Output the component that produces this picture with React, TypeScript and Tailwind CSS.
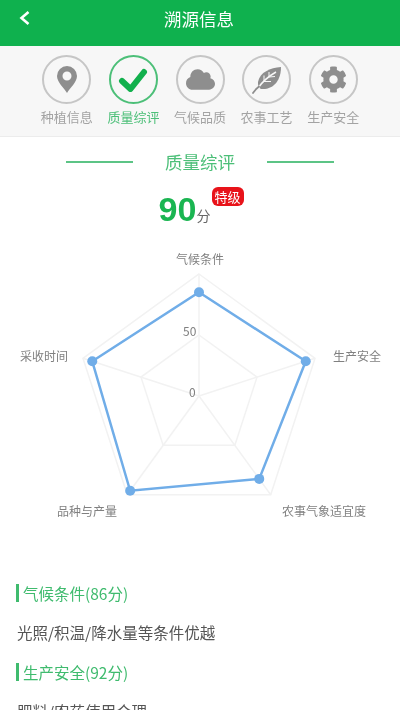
import React from 'react';
import { FaCog, FaCloud } from 'react-icons/fa';

const font = { fontFamily: '"Noto Sans CJK SC", sans-serif' };

const cx = 199;
const cy = 397;
const R = 122;
const scores = [0.85, 0.92, 0.84, 0.96, 0.92];

const point = (i: number, r: number) => {
  const a = (-90 + i * 72) * (Math.PI / 180);
  return [cx + r * Math.cos(a), cy - 240 + r * Math.sin(a)];
};
const ring = (r: number) => [0, 1, 2, 3, 4].map((i) => point(i, r).join(',')).join(' ');

const PinIcon = () => (
  <svg width="20" height="27" viewBox="0 0 20 27">
    <path
      fillRule="evenodd"
      fill="#8e8e8e"
      d="M10 0a10 10 0 0 1 10 10c0 6-7 12-10 17C7 22 0 16 0 10A10 10 0 0 1 10 0zm0 5.500a4.500 4.500 0 1 0 0 9 4.500 4.500 0 0 0 0-9z"
    />
  </svg>
);

const CheckIcon = () => (
  <svg width="30" height="24" viewBox="0 0 30 24">
    <path d="M4 13l8.500 8L26 4" fill="none" stroke="#12b04d" strokeWidth="6" strokeLinecap="round" strokeLinejoin="round" />
  </svg>
);

const LeafIcon = () => (
  <svg width="30" height="28" viewBox="0 0 30 28">
    <path fill="#8e8e8e" d="M29 1C18 2 8 6 6 16c-.500 3 1 6 3 7C22 24 29 14 29 1z" />
    <path d="M6 22C11 15 17 10 24 6" fill="none" stroke="#f7f7f7" strokeWidth="1.500" />
    <path d="M1 27c2-3 4-5 6-6.500" fill="none" stroke="#8e8e8e" strokeWidth="1.800" strokeLinecap="round" />
    <path d="M12 15.500l0-6M17 11l0-5M12 15.500l7 0M17 11l6-.500" fill="none" stroke="#f7f7f7" strokeWidth="1" />
  </svg>
);

const tabs = [
  { label: '种植信息', icon: <PinIcon /> },
  { label: '质量综评', icon: <CheckIcon />, active: true },
  { label: '气候品质', icon: <FaCloud className="w-[29px] h-[29px] text-[#8e8e8e]" /> },
  { label: '农事工艺', icon: <LeafIcon /> },
  { label: '生产安全', icon: <FaCog className="w-[27px] h-[27px] text-[#8e8e8e]" /> },
];

const sections = [
  { title: '气候条件(86分)', text: '光照/积温/降水量等条件优越' },
  { title: '生产安全(92分)', text: '肥料/农药使用合理' },
];

export default function App() {
  return (
    <div className="w-[400px] h-[710px] overflow-hidden bg-white blur-[0.5px]" style={font}>
      <div className="relative h-[46px] bg-[#0fb14e] flex items-center justify-center pb-[8px] pr-[2px] text-white text-[17.500px]">
        <svg className="absolute left-[18px] top-[10px]" width="13" height="16" viewBox="0 0 13 16">
          <path d="M10.500 2L3.500 8l7 6" fill="none" stroke="white" strokeWidth="2.600" />
        </svg>
        溯源信息
      </div>

      <div className="h-[91px] bg-[#f7f7f7] border-b border-[#ececec] flex justify-center pt-[9px]">
        {tabs.map((t) => (
          <div key={t.label} className="w-[66.600px] flex flex-col items-center">
            <div className={`w-[49px] h-[49px] rounded-full border-2 flex items-center justify-center ${t.active ? 'border-[#4cbf78]' : 'border-[#c6c6c6]'}`}>
              {t.icon}
            </div>
            <span className={`mt-[3px] text-[13px] leading-[20px] ${t.active ? 'text-[#4cbf78]' : 'text-[#a3a3a3]'}`}>{t.label}</span>
          </div>
        ))}
      </div>

      <div className="mt-[13px] flex items-center justify-center">
        <div className="w-[67px] h-[2px] bg-[#5cc486]" />
        <span className="w-[134px] text-center text-[17.500px] leading-[24px] text-[#4cbf78]">质量综评</span>
        <div className="w-[67px] h-[2px] bg-[#5cc486]" />
      </div>

      <div className="mt-[13px] h-[43px] flex justify-center items-end">
        <div className="relative flex items-baseline -ml-[31px]">
          <span className="text-[34px] leading-[42px] font-bold text-[#1ab551]" style={{ fontFamily: '"Liberation Sans", sans-serif' }}>90</span>
          <span className="text-[14px] text-[#666666]">分</span>
          <span className="absolute left-[53px] top-[-1px] w-[32px] h-[19px] rounded-[6px] bg-[#e8131a] text-white text-[13px] leading-[19px] text-center">特级</span>
        </div>
      </div>

      <svg className="block mt-[9px]" width="400" height="330" viewBox="0 0 400 330">
        {[R, R / 2].map((r) => (
          <polygon key={r} points={ring(r)} fill="none" stroke="#f2f2f2" strokeWidth="1.500" />
        ))}
        {[0, 1, 2, 3, 4].map((i) => {
          const [x, y] = point(i, R);
          return <line key={i} x1={cx} y1={cy - 240} x2={x} y2={y} stroke="#f2f2f2" strokeWidth="1.500" />;
        })}
        <polygon
          points={scores.map((s, i) => point(i, R * s).join(',')).join(' ')}
          fill="none"
          stroke="#70ade8"
          strokeWidth="2.500"
        />
        {scores.map((s, i) => {
          const [x, y] = point(i, R * s);
          return <circle key={i} cx={x} cy={y} r="5" fill="#70ade8" />;
        })}
        <g fontSize="12" fill="#808080" dominantBaseline="central">
          <text x="200" y="19" textAnchor="middle">气候条件</text>
          <text x="333" y="116">生产安全</text>
          <text x="282" y="271">农事气象适宜度</text>
          <text x="57" y="271">品种与产量</text>
          <text x="20" y="116">采收时间</text>
          <text x="183" y="91">50</text>
          <text x="189" y="152">0</text>
        </g>
      </svg>

      <div className="mt-[15px] pl-[16px]">
        {sections.map((s) => (
          <div key={s.title}>
            <div className="h-[18px] border-l-[3px] border-[#3fbb6e] pl-[4px] text-[15.500px] leading-[18px] text-[#3fbb6e]">{s.title}</div>
            <div className="mt-[19px] mb-[20px] pl-[1px] text-[15.500px] leading-[22px] text-[#555555]">{s.text}</div>
          </div>
        ))}
      </div>
    </div>
  );
}
